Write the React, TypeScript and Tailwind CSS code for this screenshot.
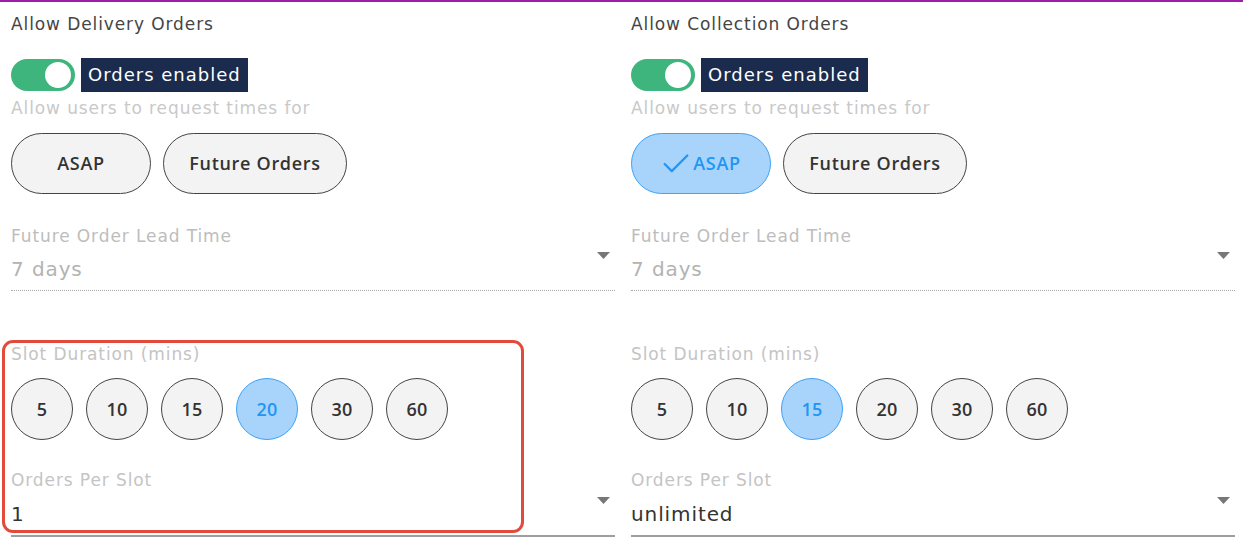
import React from 'react';
import { Check } from 'lucide-react';

const slots = [5, 10, 15, 20, 30, 60];

const Caret = () => (
    <svg width="13" height="7" viewBox="0 0 13 7" className="shrink-0">
        <path d="M0 0 L13 0 L6.5 7 Z" fill="#777" />
    </svg>
);

type ColumnProps = {
    title: string;
    asapOn: boolean;
    slot: number;
    perSlot: string;
};

const btnFont = { fontFamily: '"Open Sans", "DejaVu Sans", sans-serif' };
const pill = 'h-[61px] rounded-full border flex items-center justify-center font-semibold text-[18px] tracking-[0.7px]';
const pillOff = 'border-[#444] bg-[#f3f3f3] text-[#333]';
const pillOn = 'border-[#3ea2f7] bg-[#a8d4fb] text-[#2196f3]';

const Column = ({ title, asapOn, slot, perSlot }: ColumnProps) => (
    <div className="w-[604px] flex flex-col tracking-[0.9px]">
        <div className="mt-[10px] h-6 leading-6 text-[17px] text-[#454545]">{title}</div>

        <div className="mt-[22px] flex items-center gap-[6px] h-[34px]">
            <div className="w-16 h-8 rounded-full bg-[#3db57c] flex items-center justify-end pr-[4px]">
                <div className="w-[26px] h-[26px] rounded-full bg-white" />
            </div>
            <div className="h-[34px] px-[7px] bg-[#1a2b4d] text-white text-[18px] leading-[34px] tracking-[1px]">
                Orders enabled
            </div>
        </div>

        <div className="mt-1 h-6 leading-6 text-[17px] text-[#c9c9c9]">Allow users to request times for</div>

        <div className="mt-[13px] flex gap-3" style={btnFont}>
            <div className={`w-[140px] ${pill} ${asapOn ? pillOn : pillOff}`}>
                {asapOn && <Check size={34} strokeWidth={1.6} className="-ml-[2px]" />}
                <span>ASAP</span>
            </div>
            <div className={`w-[184px] ${pill} ${pillOff}`}>Future Orders</div>
        </div>

        <div className="mt-[30px] h-6 leading-6 text-[17px] text-[#bdbdbd]">Future Order Lead Time</div>
        <div className="mt-[7px] flex items-start justify-between border-b border-dotted border-[#aaa] pb-[7px]">
            <span className="h-7 leading-7 text-[20px] text-[#b3b3b3]">7 days</span>
            <span className="mt-[-3px] mr-[5px]"><Caret /></span>
        </div>

        <div className="mt-[51px] h-6 leading-6 text-[17px] text-[#c4c4c4]">Slot Duration (mins)</div>
        <div className="mt-[12px] flex gap-[13px]" style={btnFont}>
            {slots.map((s) => (
                <div
                    key={s}
                    className={`w-[62px] h-[62px] rounded-full border flex items-center justify-center font-semibold text-[18px] tracking-[0.3px] ${
                        s === slot ? pillOn : pillOff
                    }`}
                >
                    {s}
                </div>
            ))}
        </div>

        <div className="mt-[28px] h-6 leading-6 text-[17px] text-[#c4c4c4]">Orders Per Slot</div>
        <div className="mt-[8px] flex items-start justify-between border-b-2 border-[#9e9e9e] pb-[7px]">
            <span className="h-7 leading-7 text-[20px] text-[#333]">{perSlot}</span>
            <span className="mt-[-3px] mr-[5px]"><Caret /></span>
        </div>
    </div>
);

export default function App() {
    return (
        <div
            className="relative w-[1250px] h-[538px] bg-white overflow-hidden"
            style={{ fontFamily: '"DejaVu Sans", "Liberation Sans", sans-serif' }}
        >
            <div className="w-[1243px] h-[2px] bg-[#a01ea6]" />
            <div className="flex gap-4 pl-[11px]">
                <Column title="Allow Delivery Orders" asapOn={false} slot={20} perSlot="1" />
                <Column title="Allow Collection Orders" asapOn={true} slot={15} perSlot="unlimited" />
            </div>
            <div className="absolute left-[2px] top-[340px] w-[522px] h-[193px] border-[3px] border-[#e24a3b] rounded-[11px]" />
        </div>
    );
}
